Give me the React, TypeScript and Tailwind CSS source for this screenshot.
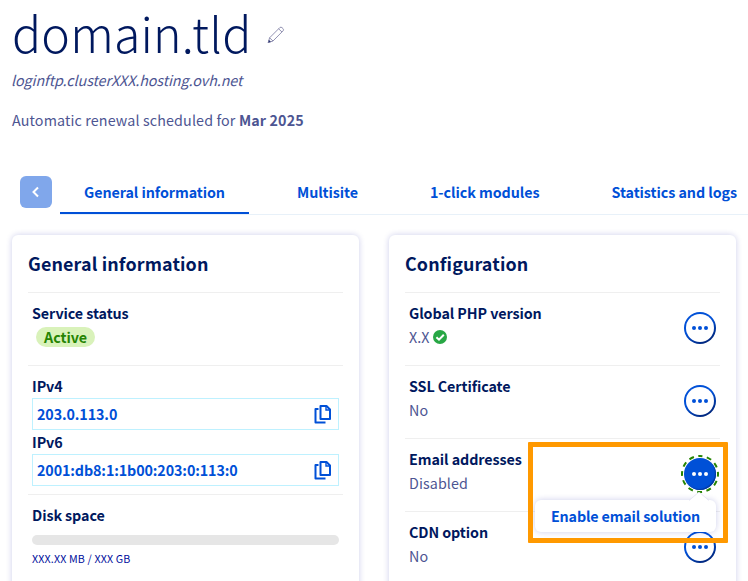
import type { ReactNode } from "react";

function CopyIcon() {
  return (
    <svg width="17" height="20" viewBox="0 0 17 20" fill="none" stroke="#0050d7" strokeWidth="2">
      <path d="M6.5 2H12.5L16 5.5V15H6.5Z" strokeLinejoin="round" />
      <path d="M12 2V6H16" strokeWidth="1.4" />
      <path d="M4.5 5H1.5V18.5H11.5" strokeLinejoin="round" />
    </svg>
  );
}

function PencilIcon() {
  return (
    <svg width="18" height="18" viewBox="0 0 18 18" fill="none" stroke="#77779f" strokeWidth="0.8">
      <path d="M1.2 16.6L2.6 11.8L12.9 1.5Q14 0.6 15.2 1.8L16 2.6Q17 3.8 16.1 4.8L6 15Z" />
      <path d="M2.6 11.8L6 15M11.6 2.8L15 6" />
      <path d="M1.2 16.6L2 14L3.8 15.7Z" fill="#00185e" />
    </svg>
  );
}

function CheckIcon() {
  return (
    <svg width="14" height="14" viewBox="0 0 14 14">
      <circle cx="7" cy="7" r="7" fill="#28a745" />
      <path d="M3.4 7.2L6 9.7L10.8 4.8" fill="none" stroke="#fff" strokeWidth="2" />
    </svg>
  );
}

function Dots({ color }: { color: string }) {
  return (
    <svg width="16" height="4" viewBox="0 0 16 4" fill={color}>
      <circle cx="2" cy="2" r="2" />
      <circle cx="8" cy="2" r="2" />
      <circle cx="14" cy="2" r="2" />
    </svg>
  );
}

function MenuButton() {
  return (
    <button className="flex size-8 items-center justify-center rounded-full bg-[linear-gradient(150deg,#0050d7_45%,#00185e)] p-[2px]">
      <span className="flex size-7 items-center justify-center rounded-full bg-white">
        <Dots color="#0050d7" />
      </span>
    </button>
  );
}

function ActiveMenuButton() {
  return (
    <div className="relative size-8">
      <button className="flex size-8 items-center justify-center rounded-full bg-[#0050d7] shadow-[inset_-1px_-1px_1px_#00389f]">
        <Dots color="#fff" />
      </button>
      <svg className="absolute -top-[3px] -left-[3px]" width="38" height="38" viewBox="0 0 38 38">
        <circle cx="19" cy="19" r="18" fill="none" stroke="#268403" strokeWidth="2" strokeDasharray="5 4.425" strokeDashoffset="2.5" transform="rotate(-90 19 19)" />
      </svg>
      <div className="absolute top-[42px] right-0 z-10 flex h-8 w-[181px] items-center justify-center rounded-md bg-white shadow-[0_0_6px_rgba(0,14,156,0.2)]">
        <svg className="absolute -top-2 right-[7px]" width="20" height="9" viewBox="0 0 20 9">
          <path d="M0 9L10 0L20 9Z" fill="#fff" />
          <path d="M0 8.5L10 0L20 8.5" fill="none" stroke="#e2e2f3" strokeWidth="0.8" />
        </svg>
        <span className="relative text-[14.3px] leading-6 font-bold tracking-[-0.16px] whitespace-nowrap text-[#0050d7]">Enable email solution</span>
      </div>
      <div className="absolute -top-4 -right-3 z-20 h-[101px] w-[200px] rounded-[1px] border-5 border-[#ff9900]" />
    </div>
  );
}

function ConfigRow({ label, children, action }: { label: string; children: ReactNode; action: ReactNode }) {
  return (
    <div className="flex h-[73px] justify-between border-t border-[#efefef] px-1">
      <div className="pt-2 whitespace-nowrap">
        <div className="text-[14.3px] leading-6 font-bold tracking-[-0.08px] text-[#00185e]">{label}</div>
        <div className="flex items-center gap-[3px] text-[14.3px] leading-6 tracking-[0.1px] text-[#4d5592]">{children}</div>
      </div>
      <div className="pt-[19px]">{action}</div>
    </div>
  );
}

function Card({ title, children }: { title: string; children: ReactNode }) {
  return (
    <section className="h-[400px] w-[347px] rounded-md bg-white px-4 pt-[15px] shadow-[0_0_6px_rgba(0,14,156,0.2)]">
      <h2 className="h-[42px] text-[17.9px] leading-[27px] font-bold tracking-[0.13px] text-[#00185e]">{title}</h2>
      {children}
    </section>
  );
}

function IpField({ label, value }: { label: string; value: string }) {
  return (
    <div className="h-14">
      <div className="h-6 text-[14.3px] leading-6 font-bold tracking-[-0.08px] text-[#00185e]">{label}</div>
      <div className="flex h-8 items-center justify-between border border-[#bef1ff] pr-[7px] pl-1">
        <span className="text-[14.3px] font-bold tracking-[-0.11px] text-[#0050d7]">{value}</span>
        <CopyIcon />
      </div>
    </div>
  );
}

export default function App() {
  return (
    <div className="h-[581px] w-[748px] bg-white font-['Noto_Sans_CJK_SC','Noto_Sans',sans-serif] text-[#4d5592]">
      <header className="h-[176px] pl-3">
        <div className="flex h-[68px]">
          <h1 className="w-[255px] text-[48.2px] leading-[64px] font-light tracking-[0.2px] whitespace-nowrap text-[#00185e]">domain.tld</h1>
          <div className="pt-[26px]"><PencilIcon /></div>
        </div>
        <p className="-ml-px text-[14.3px] leading-6 tracking-[-0.07px] italic">loginftp.clusterXXX.hosting.ovh.net</p>
        <p className="mt-4 text-[14.3px] leading-6 tracking-[0.13px]">
          Automatic renewal scheduled for <b>Mar 2025</b>
        </p>
      </header>
      <nav className="flex h-[39px] pl-5 whitespace-nowrap">
        <button className="mr-2 flex size-8 items-center justify-center rounded-md bg-[#80a7eb]">
          <svg width="8" height="12" viewBox="0 0 8 12" fill="none" stroke="#fff" strokeWidth="2">
            <path d="M6 1.5L1.5 6L6 10.5" />
          </svg>
        </button>
        <div className="flex flex-1 border-b border-[#e8f1f9] text-[14.3px] leading-8 font-bold tracking-[-0.07px] text-[#0050d7]">
          <span className="h-[38px] w-[189px] shrink-0 border-b-2 border-[#0050d7] pl-6">General information</span>
          <span className="w-[109px] shrink-0 pl-12">Multisite</span>
          <span className="w-[182px] shrink-0 pl-[72px]">1-click modules</span>
          <span className="pl-[71.5px]">Statistics and logs</span>
        </div>
      </nav>
      <main className="flex h-[366px] gap-[30px] overflow-hidden pt-5 pl-3">
        <Card title="General information">
          <div className="h-[73px] w-[315px] border-t border-[#efefef] px-1 pt-2">
            <div className="text-[14.3px] leading-6 font-bold tracking-[-0.08px] text-[#00185e]">Service status</div>
            <div className="mt-[2px] ml-1 h-5 w-[59px] rounded-full bg-[#d9f2ba] text-center text-[14.3px] leading-5 font-bold tracking-[-0.08px] text-[#268403]">Active</div>
          </div>
          <div className="h-[129px] border-t border-[#efefef] px-1 pt-2">
            <IpField label="IPv4" value="203.0.113.0" />
            <IpField label="IPv6" value="2001:db8:1:1b00:203:0:113:0" />
          </div>
          <div className="border-t border-[#efefef] px-1 pt-2">
            <div className="text-[14.3px] leading-6 font-bold tracking-[-0.08px] text-[#00185e]">Disk space</div>
            <div className="mt-2 h-[10px] rounded-full bg-[#e6e6e6]" />
            <div className="mt-1 text-[10.7px] leading-5 tracking-[0.15px] text-[#000e9c]">XXX.XX MB / XXX GB</div>
          </div>
        </Card>
        <Card title="Configuration">
          <ConfigRow label="Global PHP version" action={<MenuButton />}>
            <span>X.X</span>
            <CheckIcon />
          </ConfigRow>
          <ConfigRow label="SSL Certificate" action={<MenuButton />}>No</ConfigRow>
          <ConfigRow label="Email addresses" action={<ActiveMenuButton />}>Disabled</ConfigRow>
          <ConfigRow label="CDN option" action={<MenuButton />}>No</ConfigRow>
        </Card>
      </main>
    </div>
  );
}
